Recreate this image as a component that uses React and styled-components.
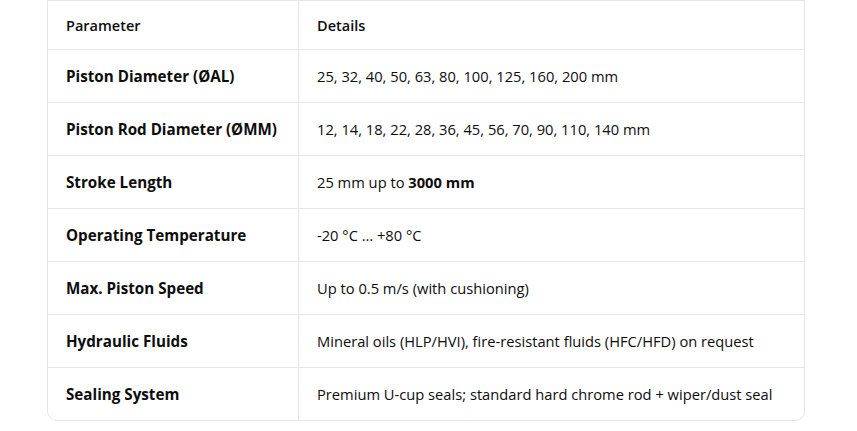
import React from "react";
import styled, { createGlobalStyle } from "styled-components";

const GlobalStyle = createGlobalStyle`
  html, body {
    margin: 0;
    padding: 0;
    background: #ffffff;
  }
  body {
    font-family: "Open Sans", "Noto Sans", sans-serif;
    color: #0d0d0d;
  }
`;

const Page = styled.div`
  padding: 0 52px 0 47px;
`;

const TableWrap = styled.div`
  border: 1px solid #e6e6e6;
  border-radius: 0 0 10px 10px;
  overflow: hidden;
`;

const Table = styled.table`
  width: 100%;
  border-collapse: collapse;
  font-size: 14.7px;
`;

const HeadCell = styled.th`
  text-align: left;
  font-weight: 600;
  font-size: 14.5px;
  height: 48px;
  padding: 0 18px;
  border-bottom: 1px solid #e6e6e6;
  border-left: ${(p) => (p.$first ? "none" : "1px solid #e6e6e6")};
  width: ${(p) => (p.$first ? "214px" : "auto")};
`;

const Row = styled.tr`
  &:not(:last-child) td {
    border-bottom: 1px solid #e6e6e6;
  }
`;

const Cell = styled.td`
  height: 52px;
  padding: 0 18px;
  font-weight: ${(p) => (p.$label ? 700 : 400)};
  font-size: ${(p) => (p.$label ? "15.2px" : "14.7px")};
  border-left: ${(p) => (p.$label ? "none" : "1px solid #e6e6e6")};
  white-space: nowrap;
`;

const rows = [
  ["Piston Diameter (ØAL)", "25, 32, 40, 50, 63, 80, 100, 125, 160, 200 mm"],
  ["Piston Rod Diameter (ØMM)", "12, 14, 18, 22, 28, 36, 45, 56, 70, 90, 110, 140 mm"],
  ["Stroke Length", <>25 mm up to <b>3000 mm</b></>],
  ["Operating Temperature", "-20 °C … +80 °C"],
  ["Max. Piston Speed", "Up to 0.5 m/s (with cushioning)"],
  ["Hydraulic Fluids", "Mineral oils (HLP/HVI), fire-resistant fluids (HFC/HFD) on request"],
  ["Sealing System", "Premium U-cup seals; standard hard chrome rod + wiper/dust seal"],
];

export default function App() {
  return (
    <Page>
      <GlobalStyle />
      <TableWrap>
        <Table>
          <thead>
            <tr>
              <HeadCell $first>Parameter</HeadCell>
              <HeadCell>Details</HeadCell>
            </tr>
          </thead>
          <tbody>
            {rows.map(([label, value]) => (
              <Row key={label}>
                <Cell $label>{label}</Cell>
                <Cell>{value}</Cell>
              </Row>
            ))}
          </tbody>
        </Table>
      </TableWrap>
    </Page>
  );
}
